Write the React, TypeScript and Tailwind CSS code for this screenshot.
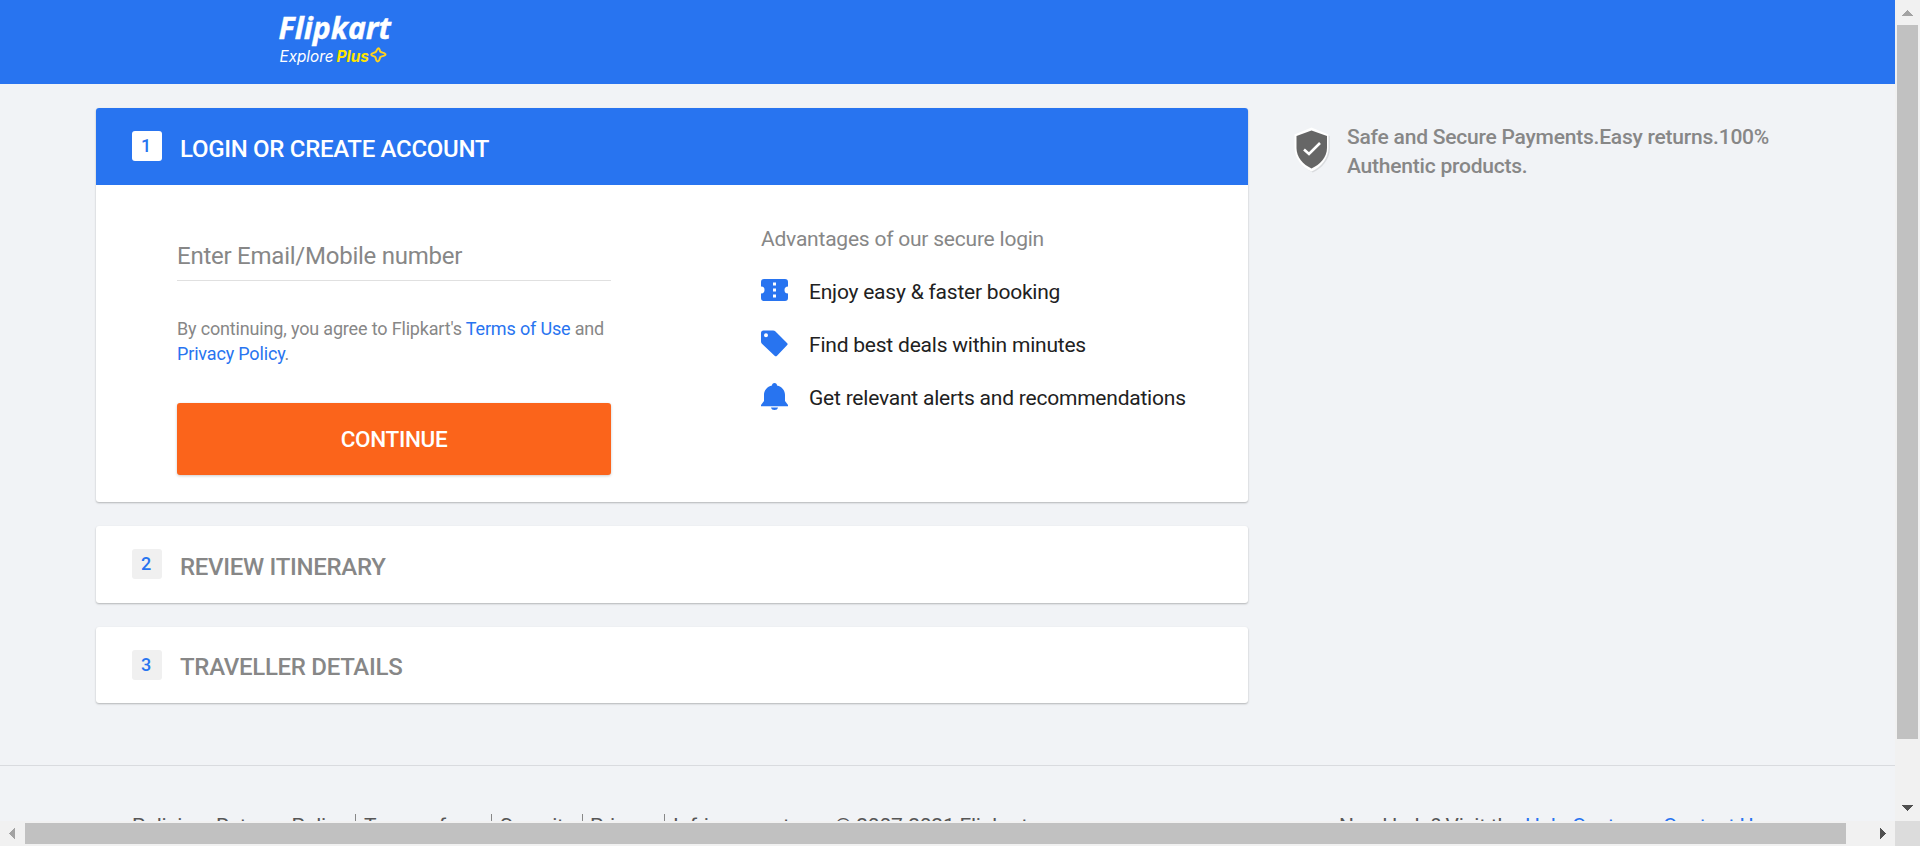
import React from "react";

function Logo() {
  return (
    <svg width="130" height="84" viewBox="0 0 130 84" className="block" aria-label="Flipkart Explore Plus">
      <text x="3.500" y="39" fill="#fff" stroke="#fff" strokeWidth="0.400" fontFamily="'Noto Sans', sans-serif" fontWeight="700" fontStyle="italic" fontSize="31" textLength="112.500" lengthAdjust="spacingAndGlyphs">Flipkart</text>
      <text x="4.500" y="62" fill="#fff" fontFamily="Inter, sans-serif" fontStyle="italic" fontSize="16" textLength="54" lengthAdjust="spacingAndGlyphs">Explore</text>
      <text x="61.500" y="62" fill="#ffe500" fontFamily="Inter, sans-serif" fontWeight="700" fontStyle="italic" fontSize="16" textLength="32.500" lengthAdjust="spacingAndGlyphs">Plus</text>
      <path d="M103.500 48.200c1.200 0 1 2.500 2 3.500s5 1.200 5 2.800-4 1.500-5 2.500-.8 4.400-2.800 4.400-1.500-3.400-2.500-4.400-4-1-4-2.500 3.500-1.500 4.500-2.500 1.300-3.800 2.800-3.800z" fill="none" stroke="#ffd21f" strokeWidth="2" strokeLinejoin="round" />
    </svg>
  );
}

function Step({ n, title, active = false, height, offset }: { n: number; title: string; active?: boolean; height: string; offset: string }) {
  return (
    <div className={`flex pl-9 ${height} ${active ? "rounded-t-[3px] bg-[#2874f0] text-white" : "text-[#878787]"}`}>
      <span className={`mt-[23px] flex h-[30px] w-[30px] items-center justify-center rounded-[3px] pb-px pr-[2px] text-[18px] font-medium text-[#2874f0] ${active ? "bg-white" : "bg-[#f0f0f0]"}`}>{n}</span>
      <h2 className={`ml-[18px] text-[24px] font-medium leading-[29px] tracking-[-0.3px] ${offset}`}>{title}</h2>
    </div>
  );
}

const TicketIcon = () => (
  <svg width="27" height="27" viewBox="0 0 27 27">
    <path d="M3 2h21q3 0 3 3v4.500a3.500 3.500 0 0 0 0 7V21q0 3-3 3H3q-3 0-3-3v-4.500a3.500 3.500 0 0 0 0-7V5q0-3 3-3z" fill="#2874f0" />
    <path d="M12 5.500h3v3h-3zM12 11.500h3v3h-3zM12 17.500h3v3h-3z" fill="#fff" />
  </svg>
);
const TagIcon = () => (
  <svg width="27" height="27" viewBox="0 0 27 27">
    <path fillRule="evenodd" d="M2.500.500h9.500q1.500 0 2.500 1L26 13q1.200 1.200 0 2.300L16 25.700q-1.200 1.200-2.400 0L1.200 14Q0 13 0 11.500V3Q0 .500 2.500.500zM5 3.200a2 2 0 1 0 0 4 2 2 0 0 0 0-4z" fill="#2874f0" />
  </svg>
);
const BellIcon = () => (
  <svg width="27" height="27" viewBox="0 0 27 27">
    <path d="M13.500 0q2.500 0 2.500 2.500C21 3.500 24 7.500 24 12v6l3 4v1.200H0V22l3-4v-6c0-4.500 3-8.500 8-9.500Q11 0 13.500 0zM10 24.500h7q-.5 2.500-3.500 2.500t-3.500-2.500z" fill="#2874f0" />
  </svg>
);

const ADVANTAGES = [
  { Icon: TicketIcon, text: "Enjoy easy & faster booking" },
  { Icon: TagIcon, text: "Find best deals within minutes" },
  { Icon: BellIcon, text: "Get relevant alerts and recommendations" },
];

const POLICIES = [
  { text: "Returns Policy", box: "w-[139px]" },
  { text: "Terms of use", box: "w-[136px] border-l pl-[8px]" },
  { text: "Security", box: "w-[91px] border-l pl-[8px]" },
  { text: "Privacy", box: "w-[82px] border-l pl-[7px]" },
  { text: "Infringement", box: "w-[171px] border-l pl-[8px]" },
];

const CARD = "rounded-[3px] bg-white shadow-[0_1px_2px_0_rgba(0,0,0,0.26)]";

export default function App() {
  return (
    <div className="grid h-[846px] w-[1920px] grid-cols-[1895px_25px] grid-rows-[821px_25px] overflow-hidden font-['Roboto',sans-serif]">
      <div className="h-[821px] overflow-hidden bg-[#f1f3f6]">
        <header className="h-[84px] bg-[#2874f0] pl-[275px]">
          <Logo />
        </header>

        <main className="flex h-[681px] pl-24 pt-6">
          <div className="flex w-[1152px] flex-col">
            <section className={`h-[394px] ${CARD}`}>
              <Step n={1} title="LOGIN OR CREATE ACCOUNT" active height="h-[77px]" offset="mt-[27px]" />
              <div className="flex pl-[81px]">
                <form className="w-[434px] pt-[48px]" onSubmit={(e) => e.preventDefault()}>
                  <input
                    className="block h-[48px] w-full border-b border-[#e0e0e0] bg-transparent pb-px text-[24px] tracking-[-0.24px] outline-none placeholder:text-[#878787]"
                    placeholder="Enter Email/Mobile number"
                  />
                  <p className="mt-[35px] text-[18px] leading-[25px] tracking-[-0.165px] text-[#878787]">
                    By continuing, you agree to Flipkart's <a className="text-[#2874f0]">Terms of Use</a> and <a className="text-[#2874f0]">Privacy Policy</a>.
                  </p>
                  <button className="mt-[37px] block h-[72px] w-full rounded-[3px] bg-[#fb641b] pt-[2px] text-[22.5px] font-medium tracking-[-0.35px] text-white shadow-[0_1px_3px_0_rgba(0,0,0,0.2)]">CONTINUE</button>
                </form>
                <div className="ml-[150px] pt-[40px] text-[21px] leading-[29px] tracking-[-0.22px]">
                  <p className="text-[#878787]">Advantages of our secure login</p>
                  <ul>
                    {ADVANTAGES.map(({ Icon, text }) => (
                      <li key={text} className="mt-[24px] flex text-[#212121]">
                        <span className="mr-[21px] mt-[-1px] h-[27px] w-[27px]"><Icon /></span>
                        {text}
                      </li>
                    ))}
                  </ul>
                </div>
              </div>
            </section>
            <section className={`mt-6 h-[77px] ${CARD}`}>
              <Step n={2} title="REVIEW ITINERARY" height="h-[77px]" offset="mt-[27px]" />
            </section>
            <section className={`mt-6 h-[76px] ${CARD}`}>
              <Step n={3} title="TRAVELLER DETAILS" height="h-[76px]" offset="mt-[26px]" />
            </section>
          </div>

          <aside className="ml-[46px] flex">
            <svg width="38" height="48" viewBox="0 0 38 48" className="mt-[18px]">
              <path d="M18.800 3.500 35.800 10V23C35.800 33 28 42.500 18.800 46.500 9 42 1.500 33 1.500 23V9.500z" fill="#d9dbde" />
              <path d="M17.500 1.500 34.500 8.500V22C34.500 32 27 41.500 17.500 45.500 8 41.500.500 32 .500 22V8.500z" fill="#fff" />
              <path d="M17.500 4.500 33 10V22C33 31 26 38.500 17.500 42.500 9 38.500 2.500 31 2.500 22V10z" fill="#666" />
              <path d="m10 23.500 5 4.500 11-11" fill="none" stroke="#fff" strokeWidth="2.600" />
            </svg>
            <p className="ml-[15px] mt-[15px] w-[440px] text-[21px] font-medium leading-[29px] tracking-[-0.22px] text-[#878787]">Safe and Secure Payments.Easy returns.100% Authentic products.</p>
          </aside>
        </main>

        <footer className="flex h-[100px] whitespace-nowrap border-t border-[#d9dbdf] pl-[132px] pt-[48px] text-[21px] leading-[25px] tracking-[-0.22px] text-[#565656]">
          <span className="w-[84px]">Policies:</span>
          {POLICIES.map(({ text, box }) => (
            <span key={text} className={`h-[24px] border-[#878787] ${box}`}>{text}</span>
          ))}
          <span className="w-[504px]">© 2007-2021 Flipkart.com</span>
          <span className="w-[186px]">Need help? Visit the</span>
          <a className="w-[112px] text-[#2874f0]">Help Center</a>
          <span className="w-[26px]">or</span>
          <a className="text-[#2874f0]">Contact Us</a>
        </footer>
      </div>

      <div className="flex flex-col items-center bg-[#f1f1f1]">
        <svg width="25" height="25" shapeRendering="crispEdges"><path d="M12.500 9.500 18 16H7z" fill="#a3a3a3" /></svg>
        <div className="h-[714px] w-[21px] bg-[#c1c1c1]" />
        <svg width="25" height="25" className="mt-auto" shapeRendering="crispEdges"><path d="M7 9h11l-5.500 6z" fill="#505050" /></svg>
      </div>
      <div className="flex items-center bg-[#f1f1f1]">
        <svg width="25" height="25" shapeRendering="crispEdges"><path d="M9 12.500 15 6v13z" fill="#a3a3a3" /></svg>
        <div className="h-[21px] w-[1821px] bg-[#c1c1c1]" />
        <svg width="25" height="25" className="ml-auto" shapeRendering="crispEdges"><path d="M16 12.500 10 6v13z" fill="#505050" /></svg>
      </div>
      <div className="bg-[#dcdcdc]" />
    </div>
  );
}
